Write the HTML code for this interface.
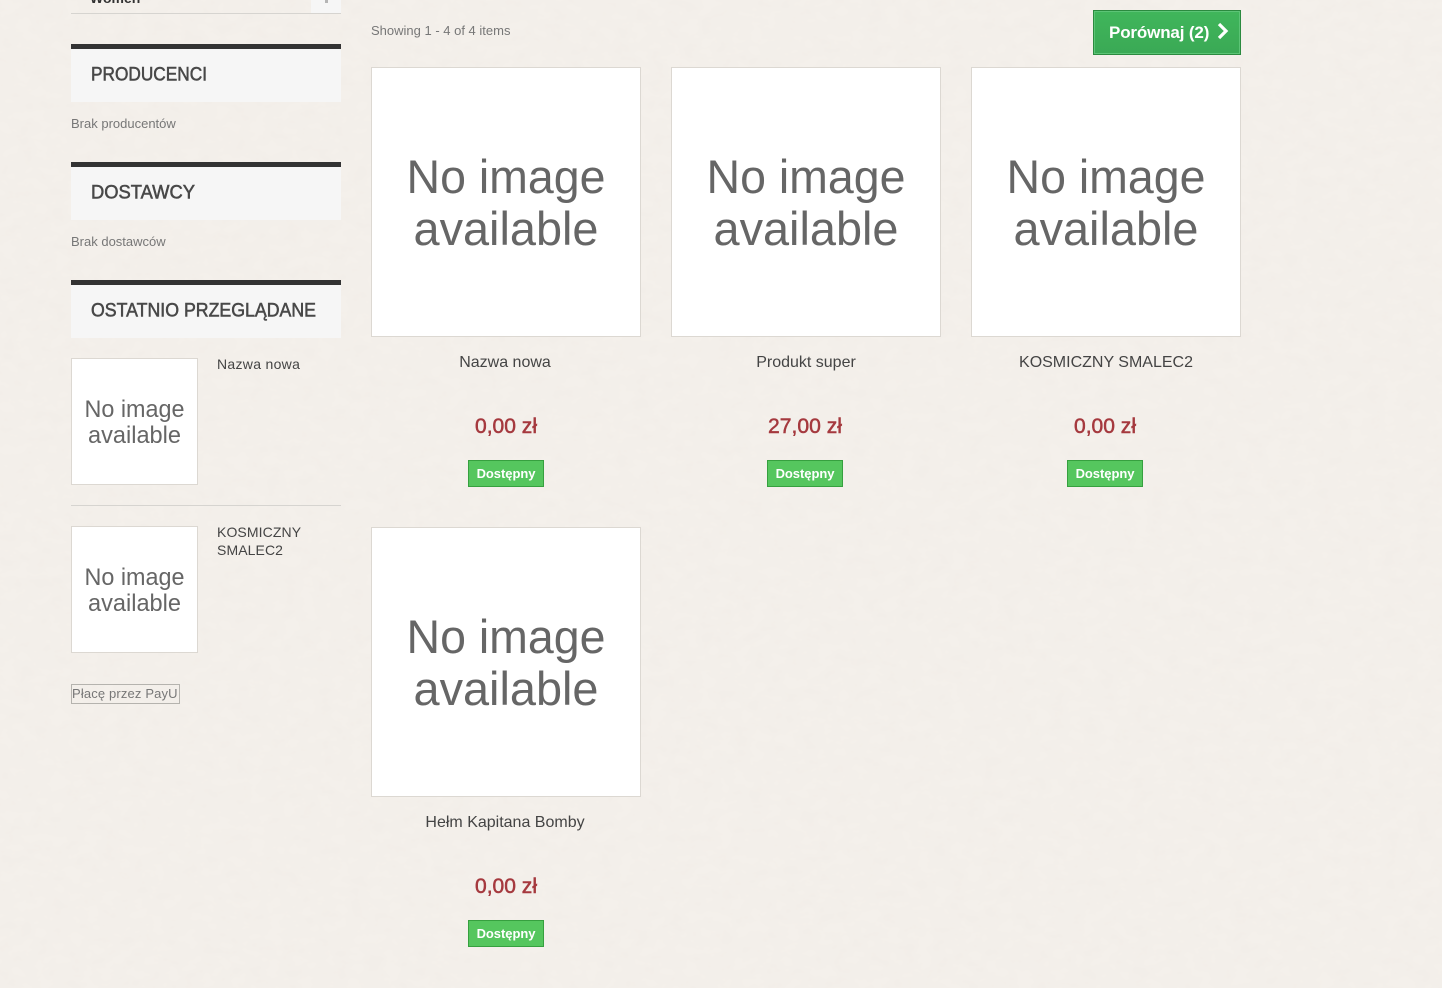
<!DOCTYPE html>
<html lang="pl"><head><meta charset="utf-8"><title>Produkty</title>
<style>
html,body{margin:0;padding:0}
body{width:1442px;height:988px;overflow:hidden;position:relative;background:#f4f0eb;font-family:"Liberation Sans",sans-serif}
.t{position:absolute;white-space:nowrap}
.bar{position:absolute;left:71px;width:270px;height:53px;border-top:5px solid #333;background:#f6f6f6}
.img{position:absolute;box-sizing:border-box;background:#fff;border:1px solid #dcd8d2}
.img svg{position:absolute;left:-1px;top:-1px}
.big{width:270px;height:270px}
.small{width:127px;height:127px}
.name{position:absolute;width:270px;text-align:center;font-size:16px;line-height:20px;color:#444}
.price{position:absolute;width:270px;text-align:center;height:26px}
.btn{position:absolute;box-sizing:border-box;width:76px;height:27px;background:#55c65e;border:1px solid #36a03f;color:#fff;font-weight:bold;font-size:13px;line-height:25px;text-align:center;letter-spacing:-.05px}
.side{font-size:13px;color:#777;line-height:16px}
.sn{font-size:14px;line-height:18px;color:#444;letter-spacing:.3px}
</style></head><body>
<svg width="1442" height="988" style="position:absolute;left:0;top:0" aria-hidden="true"><filter id="n"><feTurbulence type="fractalNoise" baseFrequency="0.06 0.09" numOctaves="3" seed="4"/><feColorMatrix values="0 0 0 0 0.6 0 0 0 0 0.55 0 0 0 0 0.5 0 0 0 0.08 -0.02"/></filter><rect width="1442" height="988" filter="url(#n)"/></svg>

<div class="t" style="left:90px;top:-10px;font-size:14px;font-weight:bold;line-height:16px;color:#333;">Women</div>
<div style="position:absolute;left:311px;top:0;width:30px;height:13px;background:#f6f6f6"></div>
<div style="position:absolute;left:325px;top:0;width:3px;height:3px;background:#b5b5b5"></div>
<div style="position:absolute;left:71px;top:13px;width:270px;height:1px;background:#d6d4d0"></div>

<div class="bar" style="top:44px"><svg width="270" height="53"><text x="20" y="31.500" font-family="Liberation Sans" font-size="19" fill="#484848" textLength="116" lengthAdjust="spacingAndGlyphs" stroke="#484848" stroke-width=".55">PRODUCENCI</text></svg></div>
<div class="t side" style="left:71px;top:116px;color:#777">Brak producentów</div>
<div class="bar" style="top:162px"><svg width="270" height="53"><text x="20" y="31.500" font-family="Liberation Sans" font-size="19" fill="#484848" textLength="104" lengthAdjust="spacingAndGlyphs" stroke="#484848" stroke-width=".55">DOSTAWCY</text></svg></div>
<div class="t side" style="left:71px;top:234px">Brak dostawców</div>
<div class="bar" style="top:280px"><svg width="270" height="53"><text x="20" y="31.500" font-family="Liberation Sans" font-size="19" fill="#484848" textLength="225" lengthAdjust="spacingAndGlyphs" stroke="#484848" stroke-width=".55">OSTATNIO PRZEGLĄDANE</text></svg></div>

<div class="img small" style="left:71px;top:358px"><svg width="127" height="127"><g font-family="Liberation Sans" font-size="24" fill="#666" text-anchor="middle"><text x="63.500" y="59" textLength="100" lengthAdjust="spacingAndGlyphs">No image</text><text x="63.500" y="85" textLength="93" lengthAdjust="spacingAndGlyphs">available</text></g></svg></div>
<div class="t sn" style="left:217px;top:355px">Nazwa nowa</div>
<div style="position:absolute;left:71px;top:505px;width:270px;height:1px;background:#d6d4d0"></div>
<div class="img small" style="left:71px;top:526px"><svg width="127" height="127"><g font-family="Liberation Sans" font-size="24" fill="#666" text-anchor="middle"><text x="63.500" y="59" textLength="100" lengthAdjust="spacingAndGlyphs">No image</text><text x="63.500" y="85" textLength="93" lengthAdjust="spacingAndGlyphs">available</text></g></svg></div>
<div class="t sn" style="left:217px;top:523px;letter-spacing:.1px">KOSMICZNY<br>SMALEC2</div>
<div class="t" style="left:71px;top:684px;box-sizing:border-box;width:109px;height:20px;border:1px solid #b5b3ae;font-size:13px;line-height:17px;color:#777;letter-spacing:.15px">Płacę przez PayU</div>

<div class="t" style="left:371px;top:22px;font-size:13px;line-height:17px;color:#777">Showing 1 - 4 of 4 items</div>
<div style="position:absolute;left:1093px;top:10px;box-sizing:border-box;width:148px;height:45px;background:linear-gradient(#40b65b,#3aa955);border:1px solid #2b8a3f;box-shadow:inset 0 0 0 1px #5cc476">
<span class="t" style="left:15px;top:12px;font-size:17px;line-height:20px;font-weight:bold;color:#fff;letter-spacing:-.15px">Porównaj (2)</span>
<svg width="14" height="18" style="position:absolute;left:122px;top:11px"><path d="M3 2l7 7-7 7" fill="none" stroke="#fff" stroke-width="3.200"/></svg></div>

<!-- products -->
<div class="img big" style="left:371px;top:67px"><svg width="270" height="270"><g font-family="Liberation Sans" font-size="47" fill="#666" text-anchor="middle"><text x="135" y="126" textLength="199" lengthAdjust="spacingAndGlyphs">No image</text><text x="135" y="178" textLength="185" lengthAdjust="spacingAndGlyphs">available</text></g></svg></div>
<div class="name" style="left:370px;top:351px;top:353px">Nazwa nowa</div>
<div class="price" style="left:371px;top:412px"><svg width="270" height="26"><text x="135" y="21" font-family="Liberation Sans" font-size="21" fill="#a5393e" stroke="#a5393e" stroke-width=".5" text-anchor="middle" textLength="62" lengthAdjust="spacingAndGlyphs">0,00 zł</text></svg></div>
<div class="btn" style="left:468px;top:460px">Dostępny</div>

<div class="img big" style="left:671px;top:67px"><svg width="270" height="270"><g font-family="Liberation Sans" font-size="47" fill="#666" text-anchor="middle"><text x="135" y="126" textLength="199" lengthAdjust="spacingAndGlyphs">No image</text><text x="135" y="178" textLength="185" lengthAdjust="spacingAndGlyphs">available</text></g></svg></div>
<div class="name" style="left:671px;top:353px">Produkt super</div>
<div class="price" style="left:670px;top:412px"><svg width="270" height="26"><text x="135" y="21" font-family="Liberation Sans" font-size="21" fill="#a5393e" stroke="#a5393e" stroke-width=".5" text-anchor="middle" textLength="74" lengthAdjust="spacingAndGlyphs">27,00 zł</text></svg></div>
<div class="btn" style="left:767px;top:460px">Dostępny</div>

<div class="img big" style="left:971px;top:67px"><svg width="270" height="270"><g font-family="Liberation Sans" font-size="47" fill="#666" text-anchor="middle"><text x="135" y="126" textLength="199" lengthAdjust="spacingAndGlyphs">No image</text><text x="135" y="178" textLength="185" lengthAdjust="spacingAndGlyphs">available</text></g></svg></div>
<div class="name" style="left:971px;top:353px">KOSMICZNY SMALEC2</div>
<div class="price" style="left:970px;top:412px"><svg width="270" height="26"><text x="135" y="21" font-family="Liberation Sans" font-size="21" fill="#a5393e" stroke="#a5393e" stroke-width=".5" text-anchor="middle" textLength="62" lengthAdjust="spacingAndGlyphs">0,00 zł</text></svg></div>
<div class="btn" style="left:1067px;top:460px">Dostępny</div>

<div class="img big" style="left:371px;top:527px"><svg width="270" height="270"><g font-family="Liberation Sans" font-size="47" fill="#666" text-anchor="middle"><text x="135" y="126" textLength="199" lengthAdjust="spacingAndGlyphs">No image</text><text x="135" y="178" textLength="185" lengthAdjust="spacingAndGlyphs">available</text></g></svg></div>
<div class="name" style="left:370px;top:813px">Hełm Kapitana Bomby</div>
<div class="price" style="left:371px;top:872px"><svg width="270" height="26"><text x="135" y="21" font-family="Liberation Sans" font-size="21" fill="#a5393e" stroke="#a5393e" stroke-width=".5" text-anchor="middle" textLength="62" lengthAdjust="spacingAndGlyphs">0,00 zł</text></svg></div>
<div class="btn" style="left:468px;top:920px">Dostępny</div>
</body></html>
